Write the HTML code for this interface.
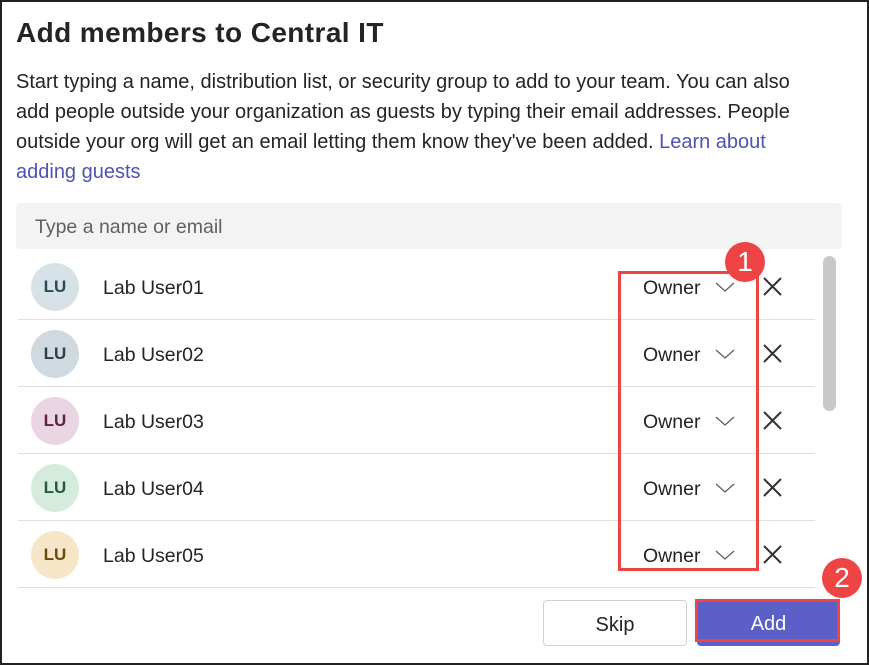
<!DOCTYPE html>
<html><head><style>
*{margin:0;padding:0;box-sizing:border-box}
body{width:869px;height:665px;background:#fff;font-family:"Liberation Sans",sans-serif;color:#242424;position:relative;overflow:hidden}
.a{position:absolute}
.t{left:16px;top:17px;font-size:28px;font-weight:bold;letter-spacing:0.4px;color:#242424}
.p{left:16px;top:67px;font-size:20px;line-height:30px;color:#242424;white-space:nowrap}
.p span{color:#4f52b2}
.in{left:16px;top:203px;width:826px;height:46px;background:#f3f3f3;border-radius:4px;font-size:19.5px;color:#616161;padding:13px 19px}
.av{width:48px;height:48px;border-radius:50%;font-size:17px;font-weight:bold;text-align:center;line-height:48px;left:31px}
.nm{left:103px;font-size:19.5px}
.ow{left:643px;font-size:19.5px}
.dv{left:18px;width:797px;height:1px;background:#e0e0e0}
.bd{width:40px;height:40px;border-radius:50%;background:#ef4444;color:#fff;font-size:28px;text-align:center;line-height:40px}
</style></head><body>
<div class="a" style="left:0;top:0;width:869px;height:665px;border:2px solid #222"></div>
<div class="a t">Add members to Central IT</div>
<div class="a p">Start typing a name, distribution list, or security group to add to your team. You can also<br>add people outside your organization as guests by typing their email addresses. People<br>outside your org will get an email letting them know they've been added. <span>Learn about</span><br><span>adding guests</span></div>
<div class="a in">Type a name or email</div>

<div class="a av" style="top:263px;background:#d6e2e8;color:#2e4a55">LU</div>
<div class="a av" style="top:330px;background:#cfd9df;color:#2c3e46">LU</div>
<div class="a av" style="top:397px;background:#ead6e3;color:#5c2348">LU</div>
<div class="a av" style="top:464px;background:#d5ebdd;color:#255c39">LU</div>
<div class="a av" style="top:531px;background:#f6e5c7;color:#6a4a10">LU</div>

<div class="a nm" style="top:277px">Lab User01</div>
<div class="a nm" style="top:344px">Lab User02</div>
<div class="a nm" style="top:411px">Lab User03</div>
<div class="a nm" style="top:478px">Lab User04</div>
<div class="a nm" style="top:545px">Lab User05</div>

<div class="a ow" style="top:277px">Owner</div>
<div class="a ow" style="top:344px">Owner</div>
<div class="a ow" style="top:411px">Owner</div>
<div class="a ow" style="top:478px">Owner</div>
<div class="a ow" style="top:545px">Owner</div>

<svg class="a" style="left:0;top:0" width="869" height="665">
<g fill="none" stroke="#616161" stroke-width="1.3">
<path d="M716 283l9 8 9-8"/><path d="M716 350l9 8 9-8"/><path d="M716 417l9 8 9-8"/><path d="M716 484l9 8 9-8"/><path d="M716 551l9 8 9-8"/>
</g>
<g fill="none" stroke="#333" stroke-width="2">
<path d="M764 278l17 17M781 278l-17 17"/><path d="M764 345l17 17M781 345l-17 17"/><path d="M764 412l17 17M781 412l-17 17"/><path d="M764 479l17 17M781 479l-17 17"/><path d="M764 546l17 17M781 546l-17 17"/>
</g>
</svg>

<div class="a dv" style="top:319px"></div>
<div class="a dv" style="top:386px"></div>
<div class="a dv" style="top:453px"></div>
<div class="a dv" style="top:520px"></div>
<div class="a dv" style="top:587px"></div>

<div class="a" style="left:823px;top:256px;width:13px;height:155px;background:#c8c8c8;border-radius:7px"></div>

<div class="a" style="left:618px;top:271px;width:141px;height:300px;border:3px solid #ef4444"></div>
<div class="a bd" style="left:725px;top:242px">1</div>

<div class="a" style="left:543px;top:600px;width:144px;height:46px;border:1px solid #d1d1d1;border-radius:4px;text-align:center;line-height:48px;font-size:20px">Skip</div>
<div class="a" style="left:697px;top:600px;width:143px;height:46px;background:#5b5fc7;border-radius:4px;text-align:center;line-height:48px;font-size:20px;color:#fff">Add</div>
<div class="a" style="left:695px;top:599px;width:145px;height:43px;border:3px solid #ef4444"></div>
<div class="a bd" style="left:822px;top:558px">2</div>
</body></html>
